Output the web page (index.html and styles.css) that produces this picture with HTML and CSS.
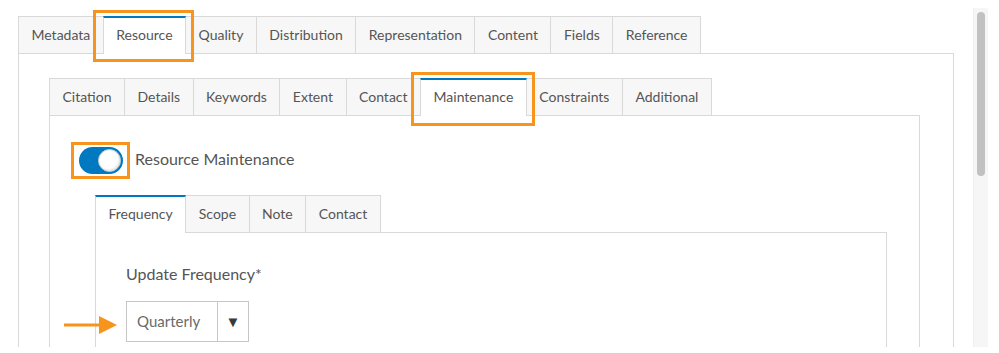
FILE: index.html
```html
<!DOCTYPE html>
<html lang="en">
<head>
  <meta charset="UTF-8" />
  <title>Resource Maintenance</title>
  <link rel="stylesheet" href="styles.css">
</head>
<body>
  <div class="viewport">
    <div class="scroll-content">
      <div class="tabs tabs-top">
        <div class="tab">Metadata</div>
        <div class="tab active marked marked-resource">Resource</div>
        <div class="tab">Quality</div>
        <div class="tab">Distribution</div>
        <div class="tab">Representation</div>
        <div class="tab">Content</div>
        <div class="tab">Fields</div>
        <div class="tab">Reference</div>
      </div>
      <div class="panel panel-top">
        <div class="tabs">
          <div class="tab">Citation</div>
          <div class="tab">Details</div>
          <div class="tab">Keywords</div>
          <div class="tab">Extent</div>
          <div class="tab">Contact</div>
          <div class="tab active marked marked-maint">Maintenance</div>
          <div class="tab">Constraints</div>
          <div class="tab">Additional</div>
        </div>
        <div class="panel panel-resource">
          <div class="switch-row">
            <div class="switch marked marked-switch">
              <span class="switch-knob"></span>
            </div>
            <span class="switch-label">Resource Maintenance</span>
          </div>
          <div class="maint-block">
            <div class="tabs">
              <div class="tab active">Frequency</div>
              <div class="tab">Scope</div>
              <div class="tab">Note</div>
              <div class="tab">Contact</div>
            </div>
            <div class="panel panel-maint">
              <div class="field-label">Update Frequency*</div>
              <div class="select">
                <svg class="pointer" width="54" height="18" viewBox="0 0 54 18">
                  <line x1="0" y1="9" x2="38" y2="9" stroke="#f7941d" stroke-width="3"/>
                  <polygon points="35,0 53,9 35,18" fill="#f7941d"/>
                </svg>
                <span class="select-value">Quarterly</span>
                <span class="select-arrow">&#9660;</span>
              </div>
            </div>
          </div>
        </div>
      </div>
    </div>
    <div class="scrollbar">
      <div class="scrollbar-thumb"></div>
    </div>
  </div>
</body>
</html>
```

FILE: styles.css
```css
body {
  margin: 0;
  background: #fff;
  font-family: Lato, "Open Sans", sans-serif;
  color: #555;
}
.viewport {
  display: flex;
  margin: 8px 0 0 8px;
  width: 980px;
  height: 339px;
  overflow: hidden;
}
.scroll-content {
  flex: 1;
  padding: 8px 19px 0 10px;
}
.scrollbar {
  width: 15px;
  background: #f6f6f6;
  border-left: 1px solid #efefef;
  box-sizing: border-box;
  padding: 4px 3px 0 3px;
}
.scrollbar-thumb {
  height: 164px;
  background: #c1c1c1;
  border-radius: 4px;
}
.tabs {
  display: flex;
  align-items: flex-end;
  height: 37px;
}
.tab {
  position: relative;
  box-sizing: border-box;
  height: 37px;
  line-height: 35px;
  padding: 0 12.5px;
  margin-right: -1px;
  font-size: 14px;
  background: #f7f7f7;
  border: 1px solid #d9d9d9;
  border-bottom: none;
  white-space: nowrap;
}
.tab.active {
  height: 38px;
  margin-bottom: -1px;
  background: #fff;
  border-top: 2px solid #0079c1;
  line-height: 34px;
  z-index: 1;
}
.panel {
  border: 1px solid #d9d9d9;
  border-bottom: none;
}
.panel-top {
  padding: 24px 33px 0 30px;
  height: 400px;
}
.panel-resource {
  padding: 31px 32px 0 29px;
  height: 400px;
}
.switch-row {
  display: flex;
  align-items: center;
  gap: 12px;
}
.switch {
  position: relative;
  box-sizing: border-box;
  width: 44px;
  height: 27px;
  border-radius: 14px;
  background: #0079c1;
  padding: 2px;
  display: flex;
  justify-content: flex-end;
}
.switch-knob {
  width: 23px;
  height: 23px;
  border-radius: 50%;
  background: #fff;
  box-sizing: border-box;
  border: 1px solid #b8c9d6;
  box-shadow: inset -1px -1px 2px rgba(0, 0, 0, 0.12);
}
.switch-label {
  font-size: 16px;
  padding-bottom: 5px;
}
.maint-block {
  margin: 21px 0 0 16px;
}
.panel-maint {
  padding: 30px 30px 0 30px;
  height: 300px;
}
.field-label {
  font-size: 16px;
  line-height: 22px;
  margin-bottom: 16px;
}
.select {
  position: relative;
  display: flex;
  width: 123px;
  height: 41px;
  box-sizing: border-box;
  border: 1px solid #c6c6c6;
  font-size: 15px;
}
.select-value {
  width: 80px;
  padding-left: 10px;
  line-height: 39px;
  color: #6a6a6a;
  border-right: 1px solid #c6c6c6;
}
.select-arrow {
  flex: 1;
  text-align: center;
  line-height: 38px;
  font-size: 15px;
  color: #3a3a3a;
}
.pointer {
  position: absolute;
  left: -63px;
  top: 14px;
}
.marked::after {
  content: "";
  position: absolute;
  border: 3px solid #f7941d;
  pointer-events: none;
}
.marked-resource::after {
  top: -8px;
  bottom: -8px;
  left: -11px;
  right: -9px;
}
.marked-maint::after {
  top: -8px;
  bottom: -10px;
  left: -10px;
  right: -9px;
}
.marked-switch::after {
  top: -5px;
  bottom: -5px;
  left: -8px;
  right: -7px;
}
```
